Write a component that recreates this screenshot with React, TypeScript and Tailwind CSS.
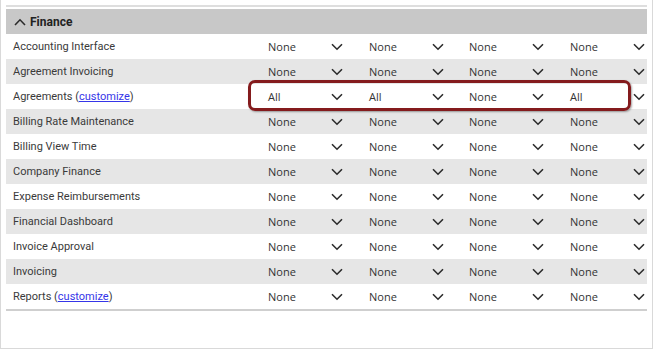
import React from 'react';

interface PermRow {
  label: string;
  customize?: boolean;
  values: string[];
}

const rows: PermRow[] = [
  { label: 'Accounting Interface', values: ['None', 'None', 'None', 'None'] },
  { label: 'Agreement Invoicing', values: ['None', 'None', 'None', 'None'] },
  { label: 'Agreements', customize: true, values: ['All', 'All', 'None', 'All'] },
  { label: 'Billing Rate Maintenance', values: ['None', 'None', 'None', 'None'] },
  { label: 'Billing View Time', values: ['None', 'None', 'None', 'None'] },
  { label: 'Company Finance', values: ['None', 'None', 'None', 'None'] },
  { label: 'Expense Reimbursements', values: ['None', 'None', 'None', 'None'] },
  { label: 'Financial Dashboard', values: ['None', 'None', 'None', 'None'] },
  { label: 'Invoice Approval', values: ['None', 'None', 'None', 'None'] },
  { label: 'Invoicing', values: ['None', 'None', 'None', 'None'] },
  { label: 'Reports', customize: true, values: ['None', 'None', 'None', 'None'] },
];

function Chevron({ up = false }: { up?: boolean }) {
  return (
    <svg width="12" height="8" viewBox="0 0 12 8" className="shrink-0">
      <polyline
        points={up ? '1,7 6,1.8 11,7' : '1,1.2 6,6.2 11,1.2'}
        fill="none"
        stroke="#2b2b2b"
        strokeWidth="1.6"
      />
    </svg>
  );
}

function SelectCell({ value }: { value: string }) {
  return (
    <div className="flex items-center h-full">
      <span className="w-[69px] pl-[6px] pt-[2px] text-[11px] text-[#333] font-['Open_Sans',sans-serif]">{value}</span>
      <Chevron />
    </div>
  );
}

export default function App() {
  return (
    <div className="w-[655px] h-[351px] bg-white overflow-hidden font-['Roboto',sans-serif]">
      <div className="relative w-[653px] h-[349px] border-l border-r border-b border-[#d9d9d9] pt-[5px] px-[5px]">
        <div className="h-[2px] bg-[#dedede]" />
        <div className="mt-[2px] h-[25px] bg-[#c8c8c8] flex items-center pl-[8px] gap-[4px]">
          <Chevron up />
          <span className="text-[12px] font-bold text-[#222]">Finance</span>
        </div>
        {rows.map((row, i) => (
          <div
            key={row.label}
            className={`h-[25px] grid grid-cols-[256px_101px_100px_101px_84px] items-center ${
              i % 2 === 1 ? 'bg-[#e6e6e6]' : 'bg-white'
            }`}
          >
            <span className="pl-[7px] pt-[1px] text-[11px] text-[#3a3a3a]">
              {row.label}
              {row.customize && (
                <>
                  {' ('}
                  <a className="text-[#3535e8] underline">customize</a>
                  {')'}
                </>
              )}
            </span>
            {row.values.map((v, j) => (
              <SelectCell key={j} value={v} />
            ))}
          </div>
        ))}
        <div className="h-[2px] bg-[#cfcfcf]" />

        {/* highlight annotation */}
        <div className="absolute left-[247px] top-[80px] w-[383px] h-[31px] border-[3px] border-[#841b1d] rounded-[7px] shadow-[1px_1px_2px_rgba(0,0,0,0.35)]" />
      </div>
    </div>
  );
}
